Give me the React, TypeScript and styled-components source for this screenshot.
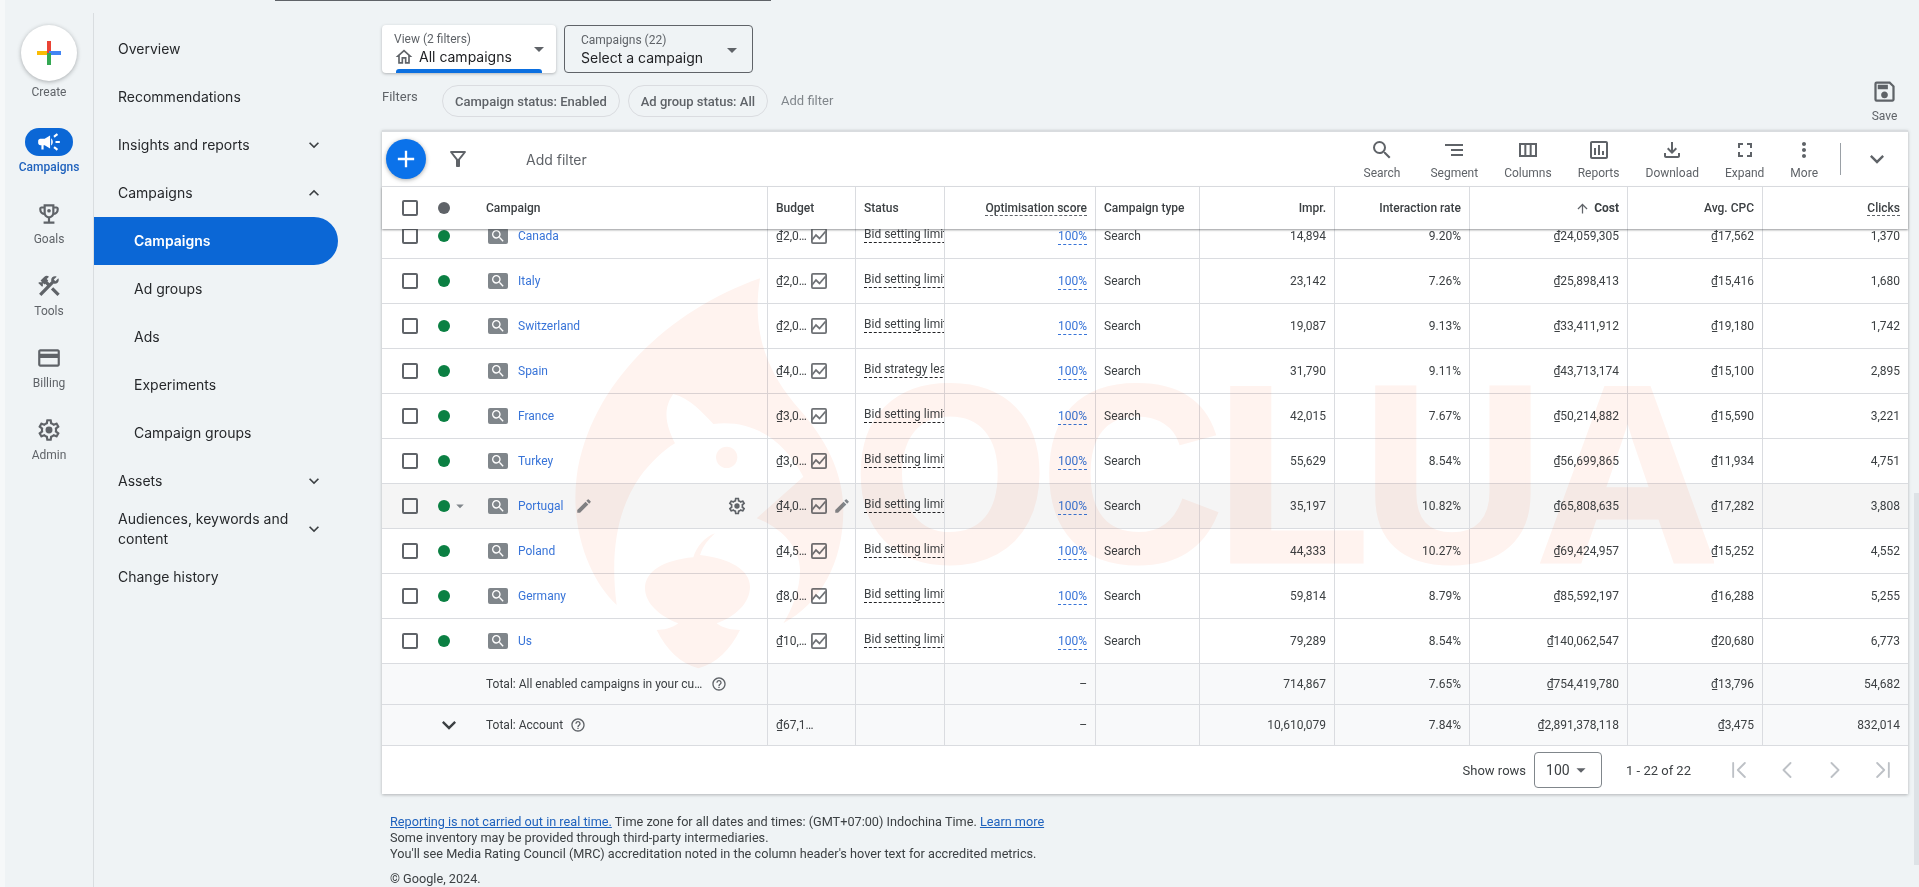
import React from 'react';
import styled, { createGlobalStyle } from 'styled-components';
import { ChevronFirst, ChevronLast, ChevronLeft, ChevronRight } from 'lucide-react';
import {
  MdAdd,
  MdArrowDropDown,
  MdArrowUpward,
  MdCampaign,
  MdConstruction,
  MdEdit,
  MdFullscreen,
  MdHelpOutline,
  MdKeyboardArrowDown,
  MdKeyboardArrowUp,
  MdMoreVert,
  MdOutlineAssessment,
  MdOutlineCreditCard,
  MdOutlineFileDownload,
  MdOutlineFilterAlt,
  MdOutlineHome,
  MdOutlineSave,
  MdOutlineViewColumn,
  MdSearch,
  MdSegment,
} from 'react-icons/md';

const COLUMNS = '385px 88px 89px 151px 104px 135px 135px 158px 135px 146px';

const GlobalStyle = createGlobalStyle`
  html, body {
    margin: 0;
    padding: 0;
    height: 100%;
    overflow: hidden;
    background: #eff3f5;
  }
  * {
    box-sizing: border-box;
  }
`;

const Shell = styled.div`
  position: relative;
  display: flex;
  height: 887px;
  overflow: hidden;
  border-left: 5px solid #f6f8f9;
  background: #eff3f5;
  font-family: Roboto, 'Liberation Sans', sans-serif;
  color: #3c4043;
`;

const TopLine = styled.div`
  position: absolute;
  left: 270px;
  top: 0;
  width: 496px;
  height: 1px;
  background: #5f6368;
`;

const Rail = styled.aside`
  flex: none;
  width: 89px;
  margin-top: 13px;
  padding-top: 12px;
  border-right: 1px solid #d9dde0;
  display: flex;
  flex-direction: column;
  align-items: center;
`;

const CreateButton = styled.div`
  width: 56px;
  height: 56px;
  border-radius: 50%;
  background: #fff;
  box-shadow: 0 1px 4px rgba(60, 64, 67, 0.4);
  display: flex;
  align-items: center;
  justify-content: center;
`;

const RailLabel = styled.span<{ $active?: boolean }>`
  font-size: 12px;
  line-height: 16px;
  font-weight: ${(p) => (p.$active ? 500 : 400)};
  color: ${(p) => (p.$active ? '#1f62bd' : '#5f6368')};
`;

const CreateLabel = styled(RailLabel)`
  margin-top: 3px;
  margin-bottom: 28px;
`;

const RailItem = styled.div`
  height: 72px;
  display: flex;
  flex-direction: column;
  align-items: center;
  gap: 3px;
`;

const RailIcon = styled.div<{ $active?: boolean }>`
  width: 48px;
  height: 28px;
  border-radius: 14px;
  display: flex;
  align-items: center;
  justify-content: center;
  font-size: 26px;
  background: ${(p) => (p.$active ? '#0b67d6' : 'transparent')};
  color: ${(p) => (p.$active ? '#fff' : '#5f6368')};
`;

const Nav = styled.nav`
  flex: none;
  width: 288px;
  padding-top: 25px;
  font-family: Inter, 'Liberation Sans', sans-serif;
`;

const NavRow = styled.div<{ $sub?: boolean; $active?: boolean }>`
  width: 244px;
  height: 48px;
  display: flex;
  align-items: center;
  justify-content: space-between;
  padding: 0 14px 0 ${(p) => (p.$sub ? 40 : 24)}px;
  border-radius: 0 24px 24px 0;
  font-size: 14px;
  line-height: 20px;
  font-weight: ${(p) => (p.$active ? 600 : 400)};
  background: ${(p) => (p.$active ? '#0b67d6' : 'transparent')};
  color: ${(p) => (p.$active ? '#fff' : '#26282b')};
  svg {
    flex: none;
    font-size: 20px;
    color: #3c4043;
  }
`;

const NavText = styled.span`
  max-width: 180px;
`;

const Main = styled.main`
  flex: 1;
  min-width: 0;
  padding-right: 11px;
`;

const Pickers = styled.div`
  display: flex;
  gap: 8px;
  padding-top: 25px;
`;

const Picker = styled.div<{ $raised?: boolean }>`
  position: relative;
  width: ${(p) => (p.$raised ? 174 : 189)}px;
  height: 48px;
  padding: ${(p) => (p.$raised ? '6px 0 0 12px' : '6px 0 0 16px')};
  border-radius: 4px;
  background: ${(p) => (p.$raised ? '#fff' : 'transparent')};
  border: ${(p) => (p.$raised ? 'none' : '1px solid #5f6368')};
  box-shadow: ${(p) => (p.$raised ? '0 1px 3px rgba(60,64,67,.35)' : 'none')};
  font-family: Inter, 'Liberation Sans', sans-serif;
`;

const PickerLabel = styled.div`
  font-size: 12px;
  line-height: 16px;
  color: #5f6368;
  font-family: Roboto, 'Liberation Sans', sans-serif;
`;

const PickerValue = styled.div`
  display: flex;
  align-items: center;
  gap: 5px;
  font-size: 14px;
  line-height: 20px;
  color: #202124;
  svg {
    font-size: 20px;
    color: #5f6368;
  }
`;

const PickerCaret = styled.span<{ $outlined?: boolean }>`
  position: absolute;
  right: ${(p) => (p.$outlined ? 8 : 5)}px;
  top: 12px;
  font-size: 24px;
  line-height: 0;
  color: #5f6368;
`;

const PickerBar = styled.span`
  position: absolute;
  left: 14px;
  right: 14px;
  bottom: 0;
  height: 4px;
  border-radius: 3px 3px 0 0;
  background: #0b6fe0;
`;

const FilterRow = styled.div`
  display: flex;
  align-items: flex-start;
  height: 45px;
  margin-top: 12px;
`;

const FilterLabel = styled.span`
  width: 60px;
  padding-top: 4px;
  font-size: 13px;
  line-height: 16px;
  color: #5f6368;
`;

const Chip = styled.span`
  height: 32px;
  margin-right: 8px;
  padding: 0 12px;
  border: 1px solid #dadce0;
  border-radius: 16px;
  display: flex;
  align-items: center;
  font-size: 13px;
  font-weight: 500;
  color: #5f6368;
`;

const ChipAdd = styled.span`
  margin-left: 5px;
  line-height: 32px;
  font-size: 13px;
  color: #80868b;
`;

const SaveButton = styled.div`
  margin-left: auto;
  margin-top: -7px;
  margin-right: 10px;
  display: flex;
  flex-direction: column;
  align-items: center;
  font-size: 12px;
  line-height: 16px;
  color: #5f6368;
  svg {
    font-size: 27px;
    margin-bottom: 3px;
  }
`;

const Card = styled.section`
  position: relative;
  background: #fff;
  border-top: 2px solid #d9dcdf;
  box-shadow: 0 1px 3px rgba(60, 64, 67, 0.35);
`;

const Toolbar = styled.div`
  height: 55px;
  display: flex;
  align-items: center;
  padding-left: 4px;
  border-bottom: 1px solid #dfe1e5;
`;

const AddButton = styled.div`
  flex: none;
  width: 40px;
  height: 40px;
  border-radius: 50%;
  background: #0b72ea;
  color: #fff;
  font-size: 28px;
  display: flex;
  align-items: center;
  justify-content: center;
  box-shadow: 0 1px 4px rgba(60, 64, 67, 0.45);
`;

const FilterIcon = styled.span`
  margin-left: 20px;
  font-size: 24px;
  line-height: 0;
  color: #5f6368;
`;

const AddFilter = styled.span`
  margin-left: 56px;
  font-size: 14px;
  font-family: Inter, 'Liberation Sans', sans-serif;
  color: #5f6368;
`;

const Tools = styled.div`
  margin-left: auto;
  display: flex;
  align-items: center;
  gap: 26px;
`;

const Tool = styled.div<{ $wide?: boolean }>`
  display: flex;
  flex-direction: column;
  align-items: center;
  margin-right: ${(p) => (p.$wide ? 4 : 0)}px;
  font-size: 12px;
  line-height: 16px;
  color: #5f6368;
  svg {
    font-size: 24px;
    margin-bottom: 3px;
  }
`;

const ToolDivider = styled.span`
  width: 1px;
  height: 32px;
  margin: 0 -4px;
  background: #9aa0a6;
`;

const ToolChevron = styled.span`
  margin-right: 17px;
  font-size: 28px;
  line-height: 0;
  color: #5f6368;
`;

const HeaderRow = styled.div`
  position: relative;
  z-index: 2;
  display: grid;
  grid-template-columns: ${COLUMNS};
  height: 42px;
  background: #fff;
  box-shadow: 0 1px 2px rgba(60, 64, 67, 0.55);
  font-size: 12px;
  font-weight: 500;
  color: #3c4043;
`;

const Rows = styled.div`
  height: 517px;
  overflow: hidden;
`;

const Row = styled.div<{ $first?: boolean; $hover?: boolean; $total?: boolean }>`
  display: grid;
  grid-template-columns: ${COLUMNS};
  height: ${(p) => (p.$total ? 41 : 45)}px;
  margin-top: ${(p) => (p.$first ? -15 : 0)}px;
  border-bottom: 1px solid #dadce0;
  background: ${(p) => (p.$hover ? '#f5f5f5' : p.$total ? '#f8f9fa' : 'transparent')};
  font-size: 12px;
  color: #3c4043;
`;

const Cell = styled.div<{ $right?: boolean }>`
  min-width: 0;
  display: flex;
  align-items: center;
  justify-content: ${(p) => (p.$right ? 'flex-end' : 'flex-start')};
  padding: 0 8px;
  border-left: 1px solid #dadce0;
  overflow: hidden;
  white-space: nowrap;
`;

const NameCell = styled.div`
  position: relative;
  display: flex;
  align-items: center;
  min-width: 0;
  padding-left: 20px;
`;

const Checkbox = styled.span`
  flex: none;
  width: 16px;
  height: 16px;
  border: 2px solid #5f6368;
  border-radius: 2px;
`;

const Dot = styled.span<{ $grey?: boolean }>`
  flex: none;
  width: 12px;
  height: 12px;
  margin-left: 20px;
  border-radius: 50%;
  background: ${(p) => (p.$grey ? '#5f6368' : '#0b8043')};
`;

const DotCaret = styled.span`
  flex: none;
  width: 16px;
  margin-left: 1px;
  margin-right: -1px;
  font-size: 18px;
  line-height: 0;
  color: #80868b;
`;

const DotSpacer = styled.span`
  flex: none;
  width: 16px;
`;

const TypeBadge = styled.span`
  flex: none;
  width: 20px;
  height: 16px;
  margin-left: 22px;
  border-radius: 2px;
  background: #80868b;
  color: #fff;
  font-size: 16px;
  display: flex;
  align-items: center;
  justify-content: center;
`;

const CampaignLink = styled.a`
  margin-left: 10px;
  color: #3874d8;
`;

const HeaderTitle = styled.span`
  margin-left: 36px;
`;

const RowEdit = styled.span`
  margin-left: 12px;
  font-size: 18px;
  line-height: 0;
  color: #80868b;
`;

const RowGear = styled.span`
  position: absolute;
  left: 345px;
  line-height: 0;
  color: #5f6368;
`;

const Money = styled.span`
  flex: none;
  width: 35px;
`;

const ChartBox = styled.span`
  flex: none;
  line-height: 0;
`;

const BudgetEdit = styled.span`
  flex: none;
  margin-left: 6px;
  font-size: 18px;
  line-height: 0;
  color: #80868b;
`;

const StatusText = styled.span`
  margin-top: -3px;
  border-bottom: 1px dashed #202124;
  line-height: 15px;
`;

const Dashed = styled.span`
  border-bottom: 1px dashed #5f6368;
`;

const ScoreLink = styled.span`
  color: #3874d8;
  border-bottom: 1px dashed #3874d8;
  line-height: 15px;
  margin-top: 1px;
`;

const SortedHead = styled.span`
  display: flex;
  align-items: center;
  gap: 4px;
  font-weight: 700;
  svg {
    font-size: 15px;
    color: #5f6368;
  }
`;

const TotalName = styled.div`
  display: flex;
  align-items: center;
  padding-left: 104px;
`;

const TotalChevron = styled.span`
  position: absolute;
  margin-left: -51px;
  font-size: 28px;
  line-height: 0;
  color: #3c4043;
`;

const HelpIcon = styled.span<{ $gap: number }>`
  margin-left: ${(p) => p.$gap}px;
  font-size: 16px;
  line-height: 0;
  color: #5f6368;
`;

const Pager = styled.div`
  height: 48px;
  display: flex;
  align-items: center;
  justify-content: flex-end;
  font-size: 13px;
  color: #3c4043;
`;

const RowsSelect = styled.div`
  width: 68px;
  height: 36px;
  margin: 0 24px 0 8px;
  padding-left: 11px;
  border: 1px solid #80868b;
  border-radius: 4px;
  display: flex;
  align-items: center;
  font-size: 14px;
  svg {
    font-size: 22px;
    color: #5f6368;
  }
`;

const PageIcons = styled.div`
  display: flex;
  margin: 0 11px 0 34px;
  color: #bdc1c6;
  line-height: 0;
  gap: 20px;
`;

const Notes = styled.footer`
  padding: 20px 0 0 8px;
  font-size: 12.7px;
  line-height: 16px;
  color: #3c4043;
`;

const NoteLink = styled.a`
  color: #1f62bd;
  text-decoration: underline;
`;

const Copyright = styled.div`
  margin-top: 9px;
`;

const Scrollbar = styled.div`
  position: absolute;
  right: 0;
  top: 493px;
  width: 5px;
  height: 372px;
  background: #dde2e6;
`;

const Watermark = styled.div`
  position: absolute;
  left: 0;
  top: 0;
  width: 100%;
  height: 100%;
  z-index: 5;
  pointer-events: none;
  mix-blend-mode: multiply;
`;

const WatermarkText = styled.span`
  position: absolute;
  left: 848px;
  top: 335px;
  font-family: 'Liberation Sans', sans-serif;
  font-size: 250px;
  line-height: 280px;
  font-weight: 700;
  letter-spacing: -6px;
  color: #fff3ef;
  -webkit-text-stroke: 5px #fff3ef;
`;

const WatermarkLogo = styled.svg`
  position: absolute;
  left: 555px;
  top: 270px;
`;

const ChartIcon = () => (
  <svg width="16" height="16" viewBox="0 0 16 16" fill="none" stroke="#6f7276" strokeWidth="1.8">
    <rect x="0.9" y="0.9" width="14.2" height="14.2" rx="1" />
    <path d="M1 12l4-5 3.5 3.5L14.5 3.5" />
  </svg>
);

const TrophyIcon = () => (
  <svg width="26" height="26" viewBox="0 0 24 24" fill="currentColor">
    <path d="M19 5h-2V3H7v2H5c-1.1 0-2 .9-2 2v1c0 2.55 1.92 4.63 4.39 4.94.63 1.5 1.98 2.63 3.61 2.96V19H7v2h10v-2h-4v-3.1c1.63-.33 2.98-1.46 3.61-2.96C19.08 12.63 21 10.55 21 8V7c0-1.1-.9-2-2-2zM5 8V7h2v3.82C5.84 10.4 5 9.3 5 8zm7 6c-1.65 0-3-1.35-3-3V5h6v6c0 1.65-1.35 3-3 3zm7-6c0 1.3-.84 2.4-2 2.82V7h2v1z" />
    <circle cx="12" cy="9" r="1.7" />
  </svg>
);

const GearIcon = ({ size }: { size: number }) => (
  <svg width={size} height={size} viewBox="0 0 24 24" fill="currentColor">
    <path d="M19.43 12.98c.04-.32.07-.64.07-.98 0-.34-.03-.66-.07-.98l2.11-1.65c.19-.15.24-.42.12-.64l-2-3.46c-.09-.16-.26-.25-.44-.25-.06 0-.12.01-.17.03l-2.49 1c-.52-.4-1.08-.73-1.69-.98l-.38-2.65C14.46 2.18 14.25 2 14 2h-4c-.25 0-.46.18-.49.42l-.38 2.65c-.61.25-1.17.59-1.69.98l-2.49-1c-.06-.02-.12-.03-.18-.03-.17 0-.34.09-.43.25l-2 3.46c-.13.22-.07.49.12.64l2.11 1.65c-.04.32-.07.65-.07.98 0 .33.03.66.07.98l-2.11 1.65c-.19.15-.24.42-.12.64l2 3.46c.09.16.26.25.44.25.06 0 .12-.01.17-.03l2.49-1c.52.4 1.08.73 1.69.98l.38 2.65c.03.24.24.42.49.42h4c.25 0 .46-.18.49-.42l.38-2.65c.61-.25 1.17-.59 1.69-.98l2.49 1c.06.02.12.03.18.03.17 0 .34-.09.43-.25l2-3.46c.12-.22.07-.49-.12-.64l-2.11-1.65zm-1.98-1.71c.04.31.05.52.05.73 0 .21-.02.43-.05.73l-.14 1.13.89.7 1.08.84-.7 1.21-1.27-.51-1.04-.42-.9.68c-.43.32-.84.56-1.25.73l-1.06.43-.16 1.13-.2 1.35h-1.4l-.19-1.35-.16-1.13-1.06-.43c-.43-.18-.83-.41-1.23-.71l-.91-.7-1.06.43-1.27.51-.7-1.21 1.08-.84.89-.7-.14-1.13c-.03-.31-.05-.54-.05-.74s.02-.43.05-.73l.14-1.13-.89-.7-1.08-.84.7-1.21 1.27.51 1.04.42.9-.68c.43-.32.84-.56 1.25-.73l1.06-.43.16-1.13.2-1.35h1.39l.19 1.35.16 1.13 1.06.43c.43.18.83.41 1.23.71l.91.7 1.06-.43 1.27-.51.7 1.21-1.07.85-.89.7.14 1.13z" />
    <circle cx="12" cy="12" r="3.2" />
  </svg>
);

const CreatePlus = () => (
  <svg width="24" height="24" viewBox="0 0 24 24">
    <rect x="0" y="10" width="12" height="4" fill="#fbbc04" />
    <rect x="10" y="0" width="4" height="12" fill="#ea4335" />
    <rect x="12" y="10" width="12" height="4" fill="#4285f4" />
    <rect x="10" y="12" width="4" height="12" fill="#34a853" />
  </svg>
);

const LogoMark = () => (
  <WatermarkLogo width="320" height="450" viewBox="0 0 960 1350" fill="#fff3ef">
    <path d="M600 25C330 120 90 340 50 620C30 780 90 930 170 1005C150 850 170 720 240 620C270 580 310 540 345 520C320 470 305 420 340 372C390 385 430 430 460 462C560 450 660 490 730 620L590 745C660 770 720 830 720 900C720 960 695 1020 670 1060C780 1000 850 880 850 720C850 600 790 500 720 420C640 330 570 210 600 25Z" />
    <path d="M465 790C435 800 410 830 400 862C310 870 255 905 255 955C255 1000 300 1040 355 1060C335 1075 310 1080 290 1080C320 1140 360 1180 415 1195C470 1180 510 1140 540 1080C515 1080 490 1075 470 1060C525 1040 570 1000 570 950C570 900 510 865 420 855C430 825 445 810 465 790Z" />
    <circle cx="500" cy="562" r="32" />
  </WatermarkLogo>
);

type CampaignRow = {
  name: string;
  budget: string;
  status: string;
  impr: string;
  rate: string;
  cost: string;
  cpc: string;
  clicks: string;
};

const LIMITED = 'Bid setting limited';

const CAMPAIGNS: CampaignRow[] = [
  { name: 'Canada', budget: '₫2,0…', status: LIMITED, impr: '14,894', rate: '9.20%', cost: '₫24,059,305', cpc: '₫17,562', clicks: '1,370' },
  { name: 'Italy', budget: '₫2,0…', status: LIMITED, impr: '23,142', rate: '7.26%', cost: '₫25,898,413', cpc: '₫15,416', clicks: '1,680' },
  { name: 'Switzerland', budget: '₫2,0…', status: LIMITED, impr: '19,087', rate: '9.13%', cost: '₫33,411,912', cpc: '₫19,180', clicks: '1,742' },
  { name: 'Spain', budget: '₫4,0…', status: 'Bid strategy learning', impr: '31,790', rate: '9.11%', cost: '₫43,713,174', cpc: '₫15,100', clicks: '2,895' },
  { name: 'France', budget: '₫3,0…', status: LIMITED, impr: '42,015', rate: '7.67%', cost: '₫50,214,882', cpc: '₫15,590', clicks: '3,221' },
  { name: 'Turkey', budget: '₫3,0…', status: LIMITED, impr: '55,629', rate: '8.54%', cost: '₫56,699,865', cpc: '₫11,934', clicks: '4,751' },
  { name: 'Portugal', budget: '₫4,0…', status: LIMITED, impr: '35,197', rate: '10.82%', cost: '₫65,808,635', cpc: '₫17,282', clicks: '3,808' },
  { name: 'Poland', budget: '₫4,5…', status: LIMITED, impr: '44,333', rate: '10.27%', cost: '₫69,424,957', cpc: '₫15,252', clicks: '4,552' },
  { name: 'Germany', budget: '₫8,0…', status: LIMITED, impr: '59,814', rate: '8.79%', cost: '₫85,592,197', cpc: '₫16,288', clicks: '5,255' },
  { name: 'Us', budget: '₫10,…', status: LIMITED, impr: '79,289', rate: '8.54%', cost: '₫140,062,547', cpc: '₫20,680', clicks: '6,773' },
];

const App = (): JSX.Element => {
  return (
    <Shell>
      <GlobalStyle />
      <TopLine />
      <Rail>
        <CreateButton>
          <CreatePlus />
        </CreateButton>
        <CreateLabel>Create</CreateLabel>
        <RailItem>
          <RailIcon $active>
            <MdCampaign />
          </RailIcon>
          <RailLabel $active>Campaigns</RailLabel>
        </RailItem>
        <RailItem>
          <RailIcon>
            <TrophyIcon />
          </RailIcon>
          <RailLabel>Goals</RailLabel>
        </RailItem>
        <RailItem>
          <RailIcon>
            <MdConstruction />
          </RailIcon>
          <RailLabel>Tools</RailLabel>
        </RailItem>
        <RailItem>
          <RailIcon>
            <MdOutlineCreditCard />
          </RailIcon>
          <RailLabel>Billing</RailLabel>
        </RailItem>
        <RailItem>
          <RailIcon>
            <GearIcon size={26} />
          </RailIcon>
          <RailLabel>Admin</RailLabel>
        </RailItem>
      </Rail>

      <Nav>
        <NavRow>Overview</NavRow>
        <NavRow>Recommendations</NavRow>
        <NavRow>
          Insights and reports <MdKeyboardArrowDown />
        </NavRow>
        <NavRow>
          Campaigns <MdKeyboardArrowUp />
        </NavRow>
        <NavRow $sub $active>
          Campaigns
        </NavRow>
        <NavRow $sub>Ad groups</NavRow>
        <NavRow $sub>Ads</NavRow>
        <NavRow $sub>Experiments</NavRow>
        <NavRow $sub>Campaign groups</NavRow>
        <NavRow>
          Assets <MdKeyboardArrowDown />
        </NavRow>
        <NavRow>
          <NavText>Audiences, keywords and content</NavText> <MdKeyboardArrowDown />
        </NavRow>
        <NavRow>Change history</NavRow>
      </Nav>

      <Main>
        <Pickers>
          <Picker $raised>
            <PickerLabel>View (2 filters)</PickerLabel>
            <PickerValue>
              <MdOutlineHome /> All campaigns
            </PickerValue>
            <PickerCaret>
              <MdArrowDropDown />
            </PickerCaret>
            <PickerBar />
          </Picker>
          <Picker>
            <PickerLabel>Campaigns (22)</PickerLabel>
            <PickerValue>Select a campaign</PickerValue>
            <PickerCaret $outlined>
              <MdArrowDropDown />
            </PickerCaret>
          </Picker>
        </Pickers>

        <FilterRow>
          <FilterLabel>Filters</FilterLabel>
          <Chip>Campaign status: Enabled</Chip>
          <Chip>Ad group status: All</Chip>
          <ChipAdd>Add filter</ChipAdd>
          <SaveButton>
            <MdOutlineSave />
            Save
          </SaveButton>
        </FilterRow>

        <Card>
          <Toolbar>
            <AddButton>
              <MdAdd />
            </AddButton>
            <FilterIcon>
              <MdOutlineFilterAlt />
            </FilterIcon>
            <AddFilter>Add filter</AddFilter>
            <Tools>
              <Tool $wide>
                <MdSearch />
                Search
              </Tool>
              <Tool>
                <MdSegment />
                Segment
              </Tool>
              <Tool>
                <MdOutlineViewColumn />
                Columns
              </Tool>
              <Tool>
                <MdOutlineAssessment />
                Reports
              </Tool>
              <Tool>
                <MdOutlineFileDownload />
                Download
              </Tool>
              <Tool>
                <MdFullscreen />
                Expand
              </Tool>
              <Tool>
                <MdMoreVert />
                More
              </Tool>
              <ToolDivider />
              <ToolChevron>
                <MdKeyboardArrowDown />
              </ToolChevron>
            </Tools>
          </Toolbar>

          <HeaderRow>
            <NameCell>
              <Checkbox />
              <Dot $grey />
              <HeaderTitle>Campaign</HeaderTitle>
            </NameCell>
            <Cell>Budget</Cell>
            <Cell>Status</Cell>
            <Cell $right>
              <Dashed>Optimisation score</Dashed>
            </Cell>
            <Cell>Campaign type</Cell>
            <Cell $right>Impr.</Cell>
            <Cell $right>Interaction rate</Cell>
            <Cell $right>
              <SortedHead>
                <MdArrowUpward /> Cost
              </SortedHead>
            </Cell>
            <Cell $right>Avg. CPC</Cell>
            <Cell $right>
              <Dashed>Clicks</Dashed>
            </Cell>
          </HeaderRow>

          <Rows>
            {CAMPAIGNS.map((c, i) => {
              const hovered = c.name === 'Portugal';
              return (
                <Row key={c.name} $first={i === 0} $hover={hovered}>
                  <NameCell>
                    <Checkbox />
                    <Dot />
                    {hovered ? (
                      <DotCaret>
                        <MdArrowDropDown />
                      </DotCaret>
                    ) : (
                      <DotSpacer />
                    )}
                    <TypeBadge>
                      <MdSearch />
                    </TypeBadge>
                    <CampaignLink>{c.name}</CampaignLink>
                    {hovered && (
                      <>
                        <RowEdit>
                          <MdEdit />
                        </RowEdit>
                        <RowGear>
                          <GearIcon size={20} />
                        </RowGear>
                      </>
                    )}
                  </NameCell>
                  <Cell>
                    <Money>{c.budget}</Money>
                    <ChartBox>
                      <ChartIcon />
                    </ChartBox>
                    {hovered && (
                      <BudgetEdit>
                        <MdEdit />
                      </BudgetEdit>
                    )}
                  </Cell>
                  <Cell>
                    <StatusText>{c.status}</StatusText>
                  </Cell>
                  <Cell $right>
                    <ScoreLink>100%</ScoreLink>
                  </Cell>
                  <Cell>Search</Cell>
                  <Cell $right>{c.impr}</Cell>
                  <Cell $right>{c.rate}</Cell>
                  <Cell $right>{c.cost}</Cell>
                  <Cell $right>{c.cpc}</Cell>
                  <Cell $right>{c.clicks}</Cell>
                </Row>
              );
            })}
            <Row $total>
              <TotalName>
                Total: All enabled campaigns in your cu…
                <HelpIcon $gap={9}>
                  <MdHelpOutline />
                </HelpIcon>
              </TotalName>
              <Cell />
              <Cell />
              <Cell $right>–</Cell>
              <Cell />
              <Cell $right>714,867</Cell>
              <Cell $right>7.65%</Cell>
              <Cell $right>₫754,419,780</Cell>
              <Cell $right>₫13,796</Cell>
              <Cell $right>54,682</Cell>
            </Row>
            <Row $total>
              <TotalName>
                <TotalChevron>
                  <MdKeyboardArrowDown />
                </TotalChevron>
                Total: Account
                <HelpIcon $gap={7}>
                  <MdHelpOutline />
                </HelpIcon>
              </TotalName>
              <Cell>₫67,1…</Cell>
              <Cell />
              <Cell $right>–</Cell>
              <Cell />
              <Cell $right>10,610,079</Cell>
              <Cell $right>7.84%</Cell>
              <Cell $right>₫2,891,378,118</Cell>
              <Cell $right>₫3,475</Cell>
              <Cell $right>832,014</Cell>
            </Row>
          </Rows>

          <Pager>
            Show rows
            <RowsSelect>
              100
              <MdArrowDropDown />
            </RowsSelect>
            1 - 22 of 22
            <PageIcons>
              <ChevronFirst size={28} strokeWidth={1.6} />
              <ChevronLeft size={28} strokeWidth={1.6} />
              <ChevronRight size={28} strokeWidth={1.6} />
              <ChevronLast size={28} strokeWidth={1.6} />
            </PageIcons>
          </Pager>
        </Card>

        <Notes>
          <NoteLink>Reporting is not carried out in real time.</NoteLink> Time zone for all dates and times: (GMT+07:00)
          Indochina Time. <NoteLink>Learn more</NoteLink>
          <div>Some inventory may be provided through third-party intermediaries.</div>
          <div>You'll see Media Rating Council (MRC) accreditation noted in the column header's hover text for accredited metrics.</div>
          <Copyright>© Google, 2024.</Copyright>
        </Notes>
      </Main>

      <Scrollbar />
      <Watermark>
        <LogoMark />
        <WatermarkText>OCLUA</WatermarkText>
      </Watermark>
    </Shell>
  );
};

export default App;
